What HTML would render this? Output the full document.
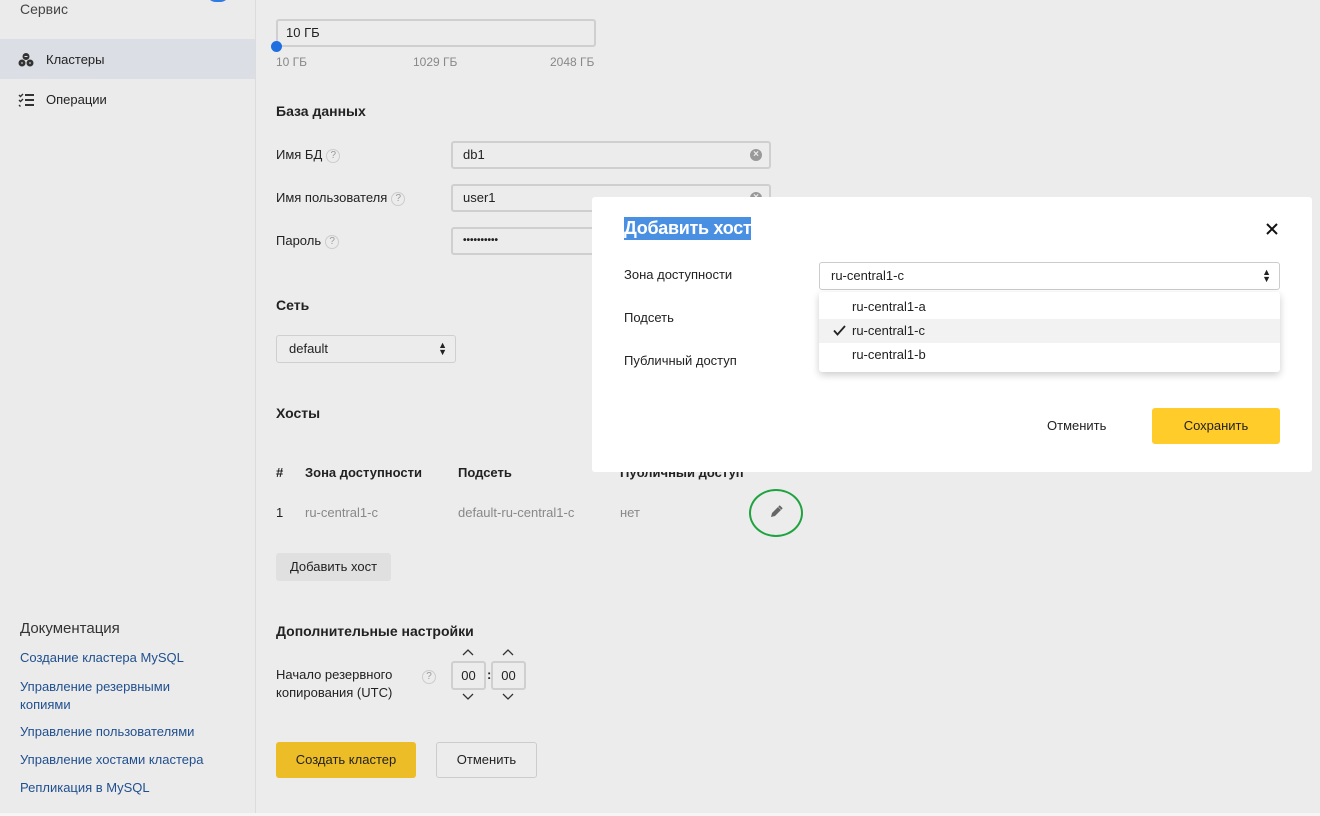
<!DOCTYPE html>
<html><head><meta charset="utf-8"><style>
*{box-sizing:border-box;margin:0;padding:0}
body{width:1320px;height:816px;overflow:hidden;background:#ececec;font-family:"Liberation Sans",sans-serif;font-size:13px;color:#222;position:relative}
.a{position:absolute;white-space:nowrap}
.side{position:absolute;left:0;top:0;width:256px;height:816px;background:#ebebeb;border-right:1px solid #dcdcdc}
.inp{position:absolute;border:2px solid #cfcfcf;border-radius:3px;background:#ececec;padding:0 10px;line-height:24px;font-size:13px}
.h{font-weight:bold;font-size:14px}
.q{display:inline-block;width:14px;height:14px;border:1px solid #ccc;border-radius:50%;font-size:10px;line-height:12px;text-align:center;color:#999;vertical-align:1px;margin-left:4px}
.clr{position:absolute;right:7px;top:6px;width:12px;height:12px;border-radius:50%;background:#999;color:#ececec;font-size:10px;line-height:12px;text-align:center;font-weight:bold}
.lnk{color:#21508f;font-size:13px}
.grey{color:#888}
</style></head><body>
<div class="side">
 <div class="a" style="left:20px;top:1px;color:#444;font-size:14px">Сервис</div>
 <div style="position:absolute;left:206px;top:-8px;width:24px;height:10px;border-radius:0 0 12px 12px;background:#2f7ae5"></div>
 <div style="position:absolute;left:0;top:39px;width:255px;height:40px;background:#dbdfe5"></div>
 <svg class="a" style="left:18px;top:52px" width="16" height="16" viewBox="0 0 16 16"><circle cx="8" cy="4.5" r="3.5" fill="#333"/><circle cx="4" cy="11" r="3.5" fill="#333"/><circle cx="12" cy="11" r="3.5" fill="#333"/><path d="M6.5 4.5h3M3 11h2M11 11h2" stroke="#ddd" stroke-width="1"/></svg>
 <div class="a" style="left:46px;top:52px;font-size:13px">Кластеры</div>
 <svg class="a" style="left:18px;top:93px" width="16" height="14" viewBox="0 0 16 14"><path d="M1 2l1.5 1.5L5 1M1 7l1.5 1.5L5 6M1 12l1.5 1.5" stroke="#333" stroke-width="1.4" fill="none"/><path d="M7 2h9M7 7h9M7 12h9" stroke="#333" stroke-width="2"/></svg>
 <div class="a" style="left:46px;top:92px;font-size:13px">Операции</div>
 <div class="a" style="left:20px;top:620px;font-size:15px;color:#333">Документация</div>
 <div class="a lnk" style="left:20px;top:650px">Создание кластера MySQL</div>
 <div class="a lnk" style="left:20px;top:678px;line-height:18px;white-space:normal;width:200px">Управление резервными копиями</div>
 <div class="a lnk" style="left:20px;top:724px">Управление пользователями</div>
 <div class="a lnk" style="left:20px;top:752px">Управление хостами кластера</div>
 <div class="a lnk" style="left:20px;top:780px">Репликация в MySQL</div>
</div>
<div style="position:absolute;left:0;top:813px;width:1320px;height:3px;background:#f5f5f5"></div>

<div class="inp" style="left:276px;top:19px;width:320px;height:28px;padding-left:8px">10 ГБ</div>
<div style="position:absolute;left:271px;top:41px;width:11px;height:11px;border-radius:50%;background:#1f6fe0"></div>
<div class="a grey" style="left:276px;top:55px;font-size:12px">10 ГБ</div>
<div class="a grey" style="left:413px;top:55px;font-size:12px">1029 ГБ</div>
<div class="a grey" style="left:550px;top:55px;font-size:12px">2048 ГБ</div>

<div class="a h" style="left:276px;top:103px">База данных</div>
<div class="a" style="left:276px;top:147px">Имя БД<span class="q">?</span></div>
<div class="inp" style="left:451px;top:141px;width:320px;height:28px">db1<span class="clr">×</span></div>
<div class="a" style="left:276px;top:190px">Имя пользователя<span class="q">?</span></div>
<div class="inp" style="left:451px;top:184px;width:320px;height:28px">user1<span class="clr">×</span></div>
<div class="a" style="left:276px;top:233px">Пароль<span class="q">?</span></div>
<div class="inp" style="left:451px;top:227px;width:320px;height:28px;font-size:10px;font-weight:bold">••••••••••</div>

<div class="a h" style="left:276px;top:297px">Сеть</div>
<div class="inp" style="left:276px;top:335px;width:180px;height:28px;border-width:1px;padding-left:12px;line-height:26px">default<span style="position:absolute;right:8px;top:0;font-size:9px;line-height:7px;padding-top:6px">▲<br>▼</span></div>

<div class="a h" style="left:276px;top:405px">Хосты</div>
<div class="a" style="left:276px;top:465px;font-weight:bold">#</div>
<div class="a" style="left:305px;top:465px;font-weight:bold">Зона доступности</div>
<div class="a" style="left:458px;top:465px;font-weight:bold">Подсеть</div>
<div class="a" style="left:620px;top:465px;font-weight:bold">Публичный доступ</div>
<div class="a" style="left:276px;top:505px">1</div>
<div class="a grey" style="left:305px;top:505px">ru-central1-c</div>
<div class="a grey" style="left:458px;top:505px">default-ru-central1-c</div>
<div class="a grey" style="left:620px;top:505px">нет</div>
<div style="position:absolute;left:749px;top:489px;width:54px;height:48px;border:2px solid #1fa340;border-radius:50%"></div>
<svg class="a" style="left:769px;top:505px" width="14" height="14" viewBox="0 0 14 14"><path d="M2 12l1-4 6-6 3 3-6 6z" fill="#666"/><path d="M10 1l3 3" stroke="#666" stroke-width="2"/></svg>
<div class="a" style="left:276px;top:553px;width:115px;height:28px;background:#e0e0e0;border-radius:3px;line-height:28px;text-align:center">Добавить хост</div>

<div class="a h" style="left:276px;top:623px">Дополнительные настройки</div>
<div class="a" style="left:276px;top:666px;line-height:18px;white-space:normal;width:140px">Начало резервного копирования (UTC)</div>
<div class="a" style="left:422px;top:668px"><span class="q" style="margin:0">?</span></div>
<svg class="a" style="left:462px;top:648px" width="12" height="8" viewBox="0 0 12 8"><path d="M1 7l5-5 5 5" stroke="#333" stroke-width="1.3" fill="none"/></svg>
<svg class="a" style="left:502px;top:648px" width="12" height="8" viewBox="0 0 12 8"><path d="M1 7l5-5 5 5" stroke="#333" stroke-width="1.3" fill="none"/></svg>
<div class="inp" style="left:451px;top:661px;width:35px;height:29px;padding:0;text-align:center;line-height:25px">00</div>
<div class="a" style="left:487px;top:667px;font-weight:bold">:</div>
<div class="inp" style="left:491px;top:661px;width:35px;height:29px;padding:0;text-align:center;line-height:25px">00</div>
<svg class="a" style="left:462px;top:693px" width="12" height="8" viewBox="0 0 12 8"><path d="M1 1l5 5 5-5" stroke="#333" stroke-width="1.3" fill="none"/></svg>
<svg class="a" style="left:502px;top:693px" width="12" height="8" viewBox="0 0 12 8"><path d="M1 1l5 5 5-5" stroke="#333" stroke-width="1.3" fill="none"/></svg>
<div class="a" style="left:276px;top:742px;width:140px;height:36px;background:#ecbd27;border-radius:3px;line-height:36px;text-align:center">Создать кластер</div>
<div class="a" style="left:436px;top:742px;width:101px;height:36px;border:1px solid #ccc;border-radius:3px;line-height:34px;text-align:center">Отменить</div>

<div style="position:absolute;left:592px;top:197px;width:720px;height:275px;background:#fff;border-radius:3px">
 <div class="a" style="left:32px;top:20px;background:#4a90e2;color:#fff;font-weight:bold;font-size:18px;line-height:23px;letter-spacing:-0.3px">Добавить хост</div>
 <svg class="a" style="left:674px;top:26px" width="12" height="12" viewBox="0 0 12 12"><path d="M1 1l10 10M11 1L1 11" stroke="#111" stroke-width="2"/></svg>
 <div class="a" style="left:32px;top:70px">Зона доступности</div>
 <div class="a" style="left:32px;top:113px">Подсеть</div>
 <div class="a" style="left:32px;top:156px">Публичный доступ</div>
 <div class="a" style="left:227px;top:65px;width:461px;height:28px;border:1px solid #ccc;border-radius:3px;line-height:26px;padding-left:11px">ru-central1-c<span style="position:absolute;right:8px;top:0;font-size:9px;line-height:7px;padding-top:6px">▲<br>▼</span></div>
 <div class="a" style="left:227px;top:95px;width:461px;height:80px;background:#fff;border-radius:3px;box-shadow:0 3px 8px rgba(0,0,0,.2)">
  <div class="a" style="left:33px;top:7px">ru-central1-a</div>
  <div class="a" style="left:0;top:27px;width:461px;height:24px;background:#f2f2f2"></div>
  <svg class="a" style="left:14px;top:33px" width="13" height="11" viewBox="0 0 13 11"><path d="M1 5.5l3.5 4L12 1" stroke="#222" stroke-width="1.8" fill="none"/></svg>
  <div class="a" style="left:33px;top:31px">ru-central1-c</div>
  <div class="a" style="left:33px;top:55px">ru-central1-b</div>
 </div>
 <div class="a" style="left:455px;top:221px">Отменить</div>
 <div class="a" style="left:560px;top:211px;width:128px;height:36px;background:#ffcc29;border-radius:3px;line-height:36px;text-align:center">Сохранить</div>
</div>
</body></html>
